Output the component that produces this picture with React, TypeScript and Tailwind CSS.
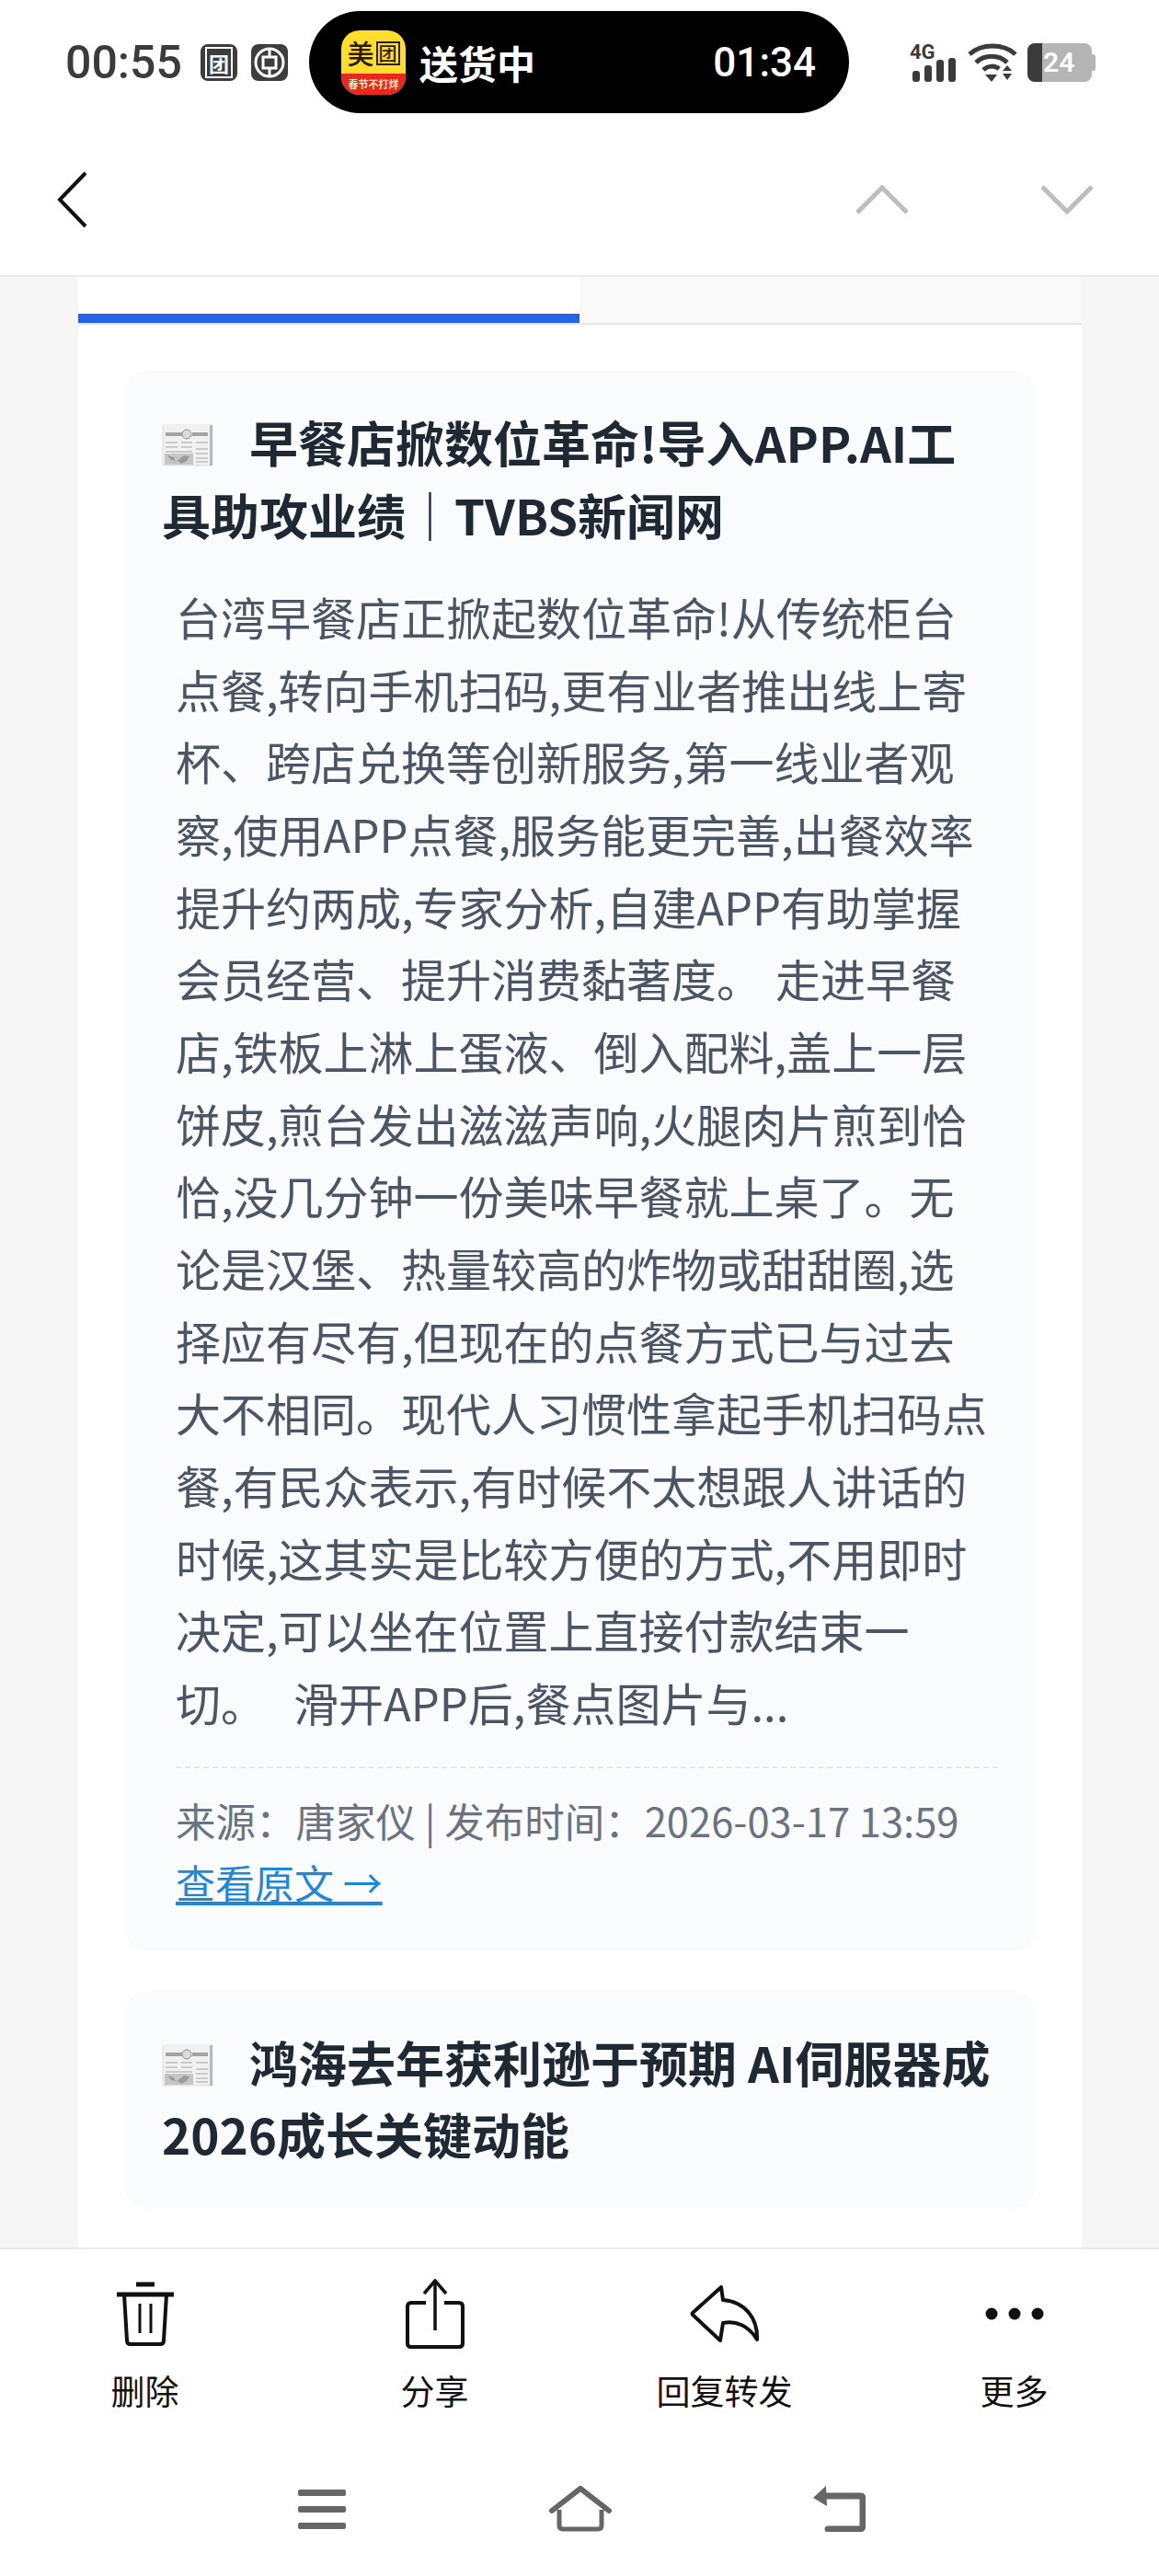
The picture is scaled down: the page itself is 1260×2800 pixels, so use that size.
import type { ReactNode } from "react";

const cjk = { fontFamily: '"Noto Sans CJK SC", "Noto Sans", sans-serif' };
const roboto = { fontFamily: "Roboto, sans-serif" };

const bodyLines = [
  "台湾早餐店正掀起数位革命!从传统柜台",
  "点餐,转向手机扫码,更有业者推出线上寄",
  "杯、跨店兑换等创新服务,第一线业者观",
  "察,使用APP点餐,服务能更完善,出餐效率",
  "提升约两成,专家分析,自建APP有助掌握",
  "会员经营、提升消费黏著度。 走进早餐",
  "店,铁板上淋上蛋液、倒入配料,盖上一层",
  "饼皮,煎台发出滋滋声响,火腿肉片煎到恰",
  "恰,没几分钟一份美味早餐就上桌了。无",
  "论是汉堡、热量较高的炸物或甜甜圈,选",
  "择应有尽有,但现在的点餐方式已与过去",
  "大不相同。现代人习惯性拿起手机扫码点",
  "餐,有民众表示,有时候不太想跟人讲话的",
  "时候,这其实是比较方便的方式,不用即时",
  "决定,可以坐在位置上直接付款结束一",
  "切。  滑开APP后,餐点图片与...",
];

function Newspaper() {
  return (
    <svg width="56" height="46" viewBox="0 0 56 46" className="inline-block mr-[39px] align-[-4px]">
      <rect x="0.5" y="0.5" width="55" height="45" rx="2" fill="#e4e4e4" />
      <rect x="2" y="1" width="50" height="43" fill="#f1f1f1" />
      <rect x="52" y="1" width="3" height="44" fill="#b9b9b9" />
      <rect x="4" y="9" width="18" height="4" fill="#a3a3a3" />
      <rect x="33" y="9" width="17" height="4" fill="#a3a3a3" />
      <circle cx="27" cy="11" r="5" fill="#dcdcdc" stroke="#8f8f8f" strokeWidth="1" />
      <path d="M4 20h13M21 20h12M37 20h13M4 25h13M21 25h12M37 27h13M4 30h29M37 32h13M37 37h13M37 41h13" stroke="#bdbdbd" strokeWidth="1.6" />
      <rect x="3" y="32" width="31" height="12" fill="#c6c6c6" />
      <path d="M6 34l7 2 2 5 4-3 5-4 6 1-3 5-6 3-4-3-7-1z" fill="#9a9a9a" />
    </svg>
  );
}

function AppIcon() {
  return (
    <div className="w-[70px] h-[70px] shrink-0 rounded-[20px] overflow-hidden bg-[#ffdd2d] flex flex-col">
      <div className="h-[47px] flex items-center justify-center gap-[2px] pt-[3px] text-[#2a1c00]">
        <span className="text-[29px] leading-none font-medium">美</span>
        <span className="w-[26px] h-[26px] border-[2px] border-[#2a1c00] flex items-center justify-center text-[20px] leading-none font-medium">
          团
        </span>
      </div>
      <div className="flex-1 bg-[#e8281c] flex items-center justify-center whitespace-nowrap text-[11px] leading-none font-bold text-[#ffe9c9]">
        春节不打烊
      </div>
    </div>
  );
}

function StatusBar() {
  return (
    <div className="h-[150px] flex shrink-0 pt-[12px]">
      <div className="w-[147px] ml-[71px] h-[111px] flex items-center text-[50px] leading-none text-[#3b3b3b] font-medium" style={roboto}>
        00:55
      </div>
      <div className="w-[40px] h-[40px] mt-[36px] rounded-[8px] bg-[#3d3d3d] flex items-center justify-center">
        <span className="w-[30px] h-[34px] border-[2px] border-white flex items-center justify-center text-[22px] leading-none text-white font-bold">
          团
        </span>
      </div>
      <svg width="40" height="40" viewBox="0 0 40 40" className="ml-[15px] mt-[36px]">
        <rect width="40" height="40" rx="8" fill="#3d3d3d" />
        <circle cx="20" cy="20" r="15" fill="none" stroke="#fff" strokeWidth="3" />
        <rect x="13" y="14" width="14" height="12" fill="none" stroke="#fff" strokeWidth="3" />
        <path d="M20 6v8M20 26v8" stroke="#fff" strokeWidth="3" />
      </svg>
      <div className="ml-[23px] w-[587px] h-[111px] rounded-[56px] bg-black flex items-center pl-[35px] pr-[36px] text-white">
        <AppIcon />
        <span className="ml-[15px] text-[42px] leading-[50px] font-bold">送货中</span>
        <span className="ml-auto text-[44px] leading-none font-medium" style={roboto}>
          01:34
        </span>
      </div>
      <svg width="52" height="42" viewBox="0 0 52 42" className="ml-[66px] mt-[35px]">
        <text x="0" y="17" fontSize="22" fontWeight="700" fill="#3b3b3b" fontFamily="Roboto, sans-serif">
          4G
        </text>
        <rect x="3" y="30" width="8" height="12" rx="3" fill="#3b3b3b" />
        <rect x="16" y="24" width="8" height="18" rx="3" fill="#3b3b3b" />
        <rect x="29" y="18" width="8" height="24" rx="3" fill="#3b3b3b" />
        <rect x="42" y="16" width="8" height="26" rx="3" fill="#3b3b3b" />
      </svg>
      <svg width="54" height="42" viewBox="0 0 54 42" className="ml-[11px] mt-[35px]">
        <path d="M2 12C15 0 39 0 52 12" fill="none" stroke="#3b3b3b" strokeWidth="5" />
        <path d="M9 21C18 12 34 12 43 21" fill="none" stroke="#3b3b3b" strokeWidth="5" />
        <path d="M17 29C22 24 30 24 34 28" fill="none" stroke="#3b3b3b" strokeWidth="5" />
        <path d="M19 34h13l-6 8zM38 30l5-6 5 6zM38 33h10l-5 7z" fill="#3b3b3b" />
      </svg>
      <div className="ml-[11px] mt-[35px] w-[70px] h-[42px] rounded-[8px] bg-[#b5b5b5] overflow-hidden flex">
        <div className="w-[16px] bg-[#3b3b3b]" />
        <span className="ml-[1px] text-[30px] leading-[42px] font-semibold text-white" style={roboto}>
          24
        </span>
      </div>
      <div className="w-[4px] h-[18px] mt-[47px] rounded-r-[3px] bg-[#b5b5b5]" />
    </div>
  );
}

function TopBar() {
  return (
    <div className="h-[151px] shrink-0 border-b-[2px] border-[#ececec] flex pl-[62px]">
      <svg width="34" height="62" viewBox="0 0 34 62" className="mt-[36px]">
        <path d="M31 2L3 31l28 29" fill="none" stroke="#111" strokeWidth="4" />
      </svg>
      <svg width="58" height="32" viewBox="0 0 58 32" className="ml-[834px] mt-[51px]">
        <path d="M2 30L29 3l27 27" fill="none" stroke="#bdbdbd" strokeWidth="5" />
      </svg>
      <svg width="58" height="32" viewBox="0 0 58 32" className="ml-[143px] mt-[51px]">
        <path d="M2 2l27 27L56 2" fill="none" stroke="#bdbdbd" strokeWidth="5" />
      </svg>
    </div>
  );
}

function Card({ title, children }: { title: ReactNode; children?: ReactNode }) {
  return (
    <div className="rounded-[24px] bg-[#fafbfd] pl-[40px] pr-[36px] pt-[38px] pb-[42px]">
      <h2 className="text-[53px] leading-[78.5px] font-bold text-[#1f2933] whitespace-nowrap">
        <Newspaper />
        {title}
      </h2>
      {children}
    </div>
  );
}

function ActionItem({ icon, label }: { icon: ReactNode; label: string }) {
  return (
    <div className="flex flex-col items-center">
      <div className="h-[76px] flex items-center justify-center">{icon}</div>
      <span className="mt-[23px] text-[37px] leading-[44px] text-[#111]">{label}</span>
    </div>
  );
}

export default function App() {
  return (
    <div className="w-[1260px] h-[2800px] bg-white flex flex-col overflow-hidden" style={cjk}>
      <StatusBar />
      <TopBar />

      <div className="flex-1 min-h-0 bg-[#f6f6f6] overflow-hidden">
        <div className="ml-[85px] w-[1091px] h-full bg-white">
          <div className="flex h-[52px] bg-[#f9f9fa] border-b-[2px] border-[#e5e7eb]">
            <div className="w-[545px] h-[50px] bg-white border-b-[10px] border-[#2563eb]" />
          </div>

          <div className="ml-[51px] mr-[51px] mt-[50px] flex flex-col gap-[44px]">
            <Card
              title={
                <>
                  早餐店掀数位革命!导入APP.AI工
                  <br />
                  具助攻业绩｜TVBS新闻网
                </>
              }
            >
              <div className="mt-[33px] pl-[15px] text-[49px] leading-[78.66px] text-[#4b5563] whitespace-pre [word-spacing:4px]">
                {bodyLines.map((line) => (
                  <div key={line}>{line}</div>
                ))}
              </div>
              <div className="ml-[15px] mr-[4px] mt-[30px] border-t-[2px] border-dashed border-[#e5e7eb] pt-[24px]">
                <p className="text-[43.5px] leading-[66px] text-[#6b7280] whitespace-nowrap">
                  来源：唐家仪 | 发布时间：2026-03-17 13:59
                </p>
                <a className="text-[43px] leading-[66px] text-[#1e88d8] underline">查看原文 →</a>
              </div>
            </Card>

            <Card
              title={
                <>
                  鸿海去年获利逊于预期 AI伺服器成
                  <br />
                  2026成长关键动能
                </>
              }
            />
          </div>
        </div>
      </div>

      <div className="h-[357px] shrink-0 border-t-[2px] border-[#ececec] bg-white">
        <div className="grid grid-cols-4 pt-[32px]">
          <ActionItem
            label="删除"
            icon={
              <svg width="64" height="70" viewBox="0 0 64 70" fill="none" stroke="#111" strokeWidth="4">
                <path d="M1 14h62" strokeWidth="5" />
                <path d="M22 3h20" strokeWidth="5" />
                <path d="M9 14l3 50q0 4 4 4h32q4 0 4-4l3-50" />
                <path d="M26 24v32M38 24v32" strokeWidth="3" />
              </svg>
            }
          />
          <ActionItem
            label="分享"
            icon={
              <svg width="64" height="76" viewBox="0 0 64 76" fill="none" stroke="#111" strokeWidth="4">
                <path d="M22 26H6q-4 0-4 4v40q0 4 4 4h52q4 0 4-4V30q0-4-4-4H42" />
                <path d="M32 4v52" strokeWidth="3.5" />
                <path d="M20 16L32 2l12 14" strokeWidth="3.5" />
              </svg>
            }
          />
          <ActionItem
            label="回复转发"
            icon={
              <svg width="76" height="62" viewBox="0 0 76 62" fill="none" stroke="#111" strokeWidth="4" strokeLinejoin="round">
                <path d="M34 2L3 30q-1 1 0 2l30 28 3-19c14-3 28 3 37 18 1-22-12-41-37-43z" />
              </svg>
            }
          />
          <ActionItem
            label="更多"
            icon={
              <svg width="64" height="16" viewBox="0 0 64 16" fill="#111">
                <circle cx="7" cy="8" r="6.5" />
                <circle cx="32" cy="8" r="6.5" />
                <circle cx="57" cy="8" r="6.5" />
              </svg>
            }
          />
        </div>

        <div className="mt-[82px] flex items-center pl-[324px]">
          <div className="w-[52px] flex flex-col gap-[11px]">
            <div className="h-[7px] rounded-[2px] bg-[#666]" />
            <div className="h-[7px] rounded-[2px] bg-[#666]" />
            <div className="h-[7px] rounded-[2px] bg-[#666]" />
          </div>
          <svg width="68" height="50" viewBox="0 0 68 50" fill="none" stroke="#666" className="ml-[221px]">
            <path d="M3 27L34 3l31 24" strokeWidth="6" strokeLinecap="round" />
            <path d="M11 26v17q0 4 4 4h38q4 0 4-4V26" strokeWidth="5" />
          </svg>
          <svg width="58" height="50" viewBox="0 0 58 50" className="ml-[218px]">
            <path d="M12 11h40q3 0 3 3v29q0 4-4 4H17" fill="none" stroke="#666" strokeWidth="7" strokeLinecap="round" />
            <path d="M15 0L1 13l15 9z" fill="#666" />
          </svg>
        </div>
      </div>
    </div>
  );
}
